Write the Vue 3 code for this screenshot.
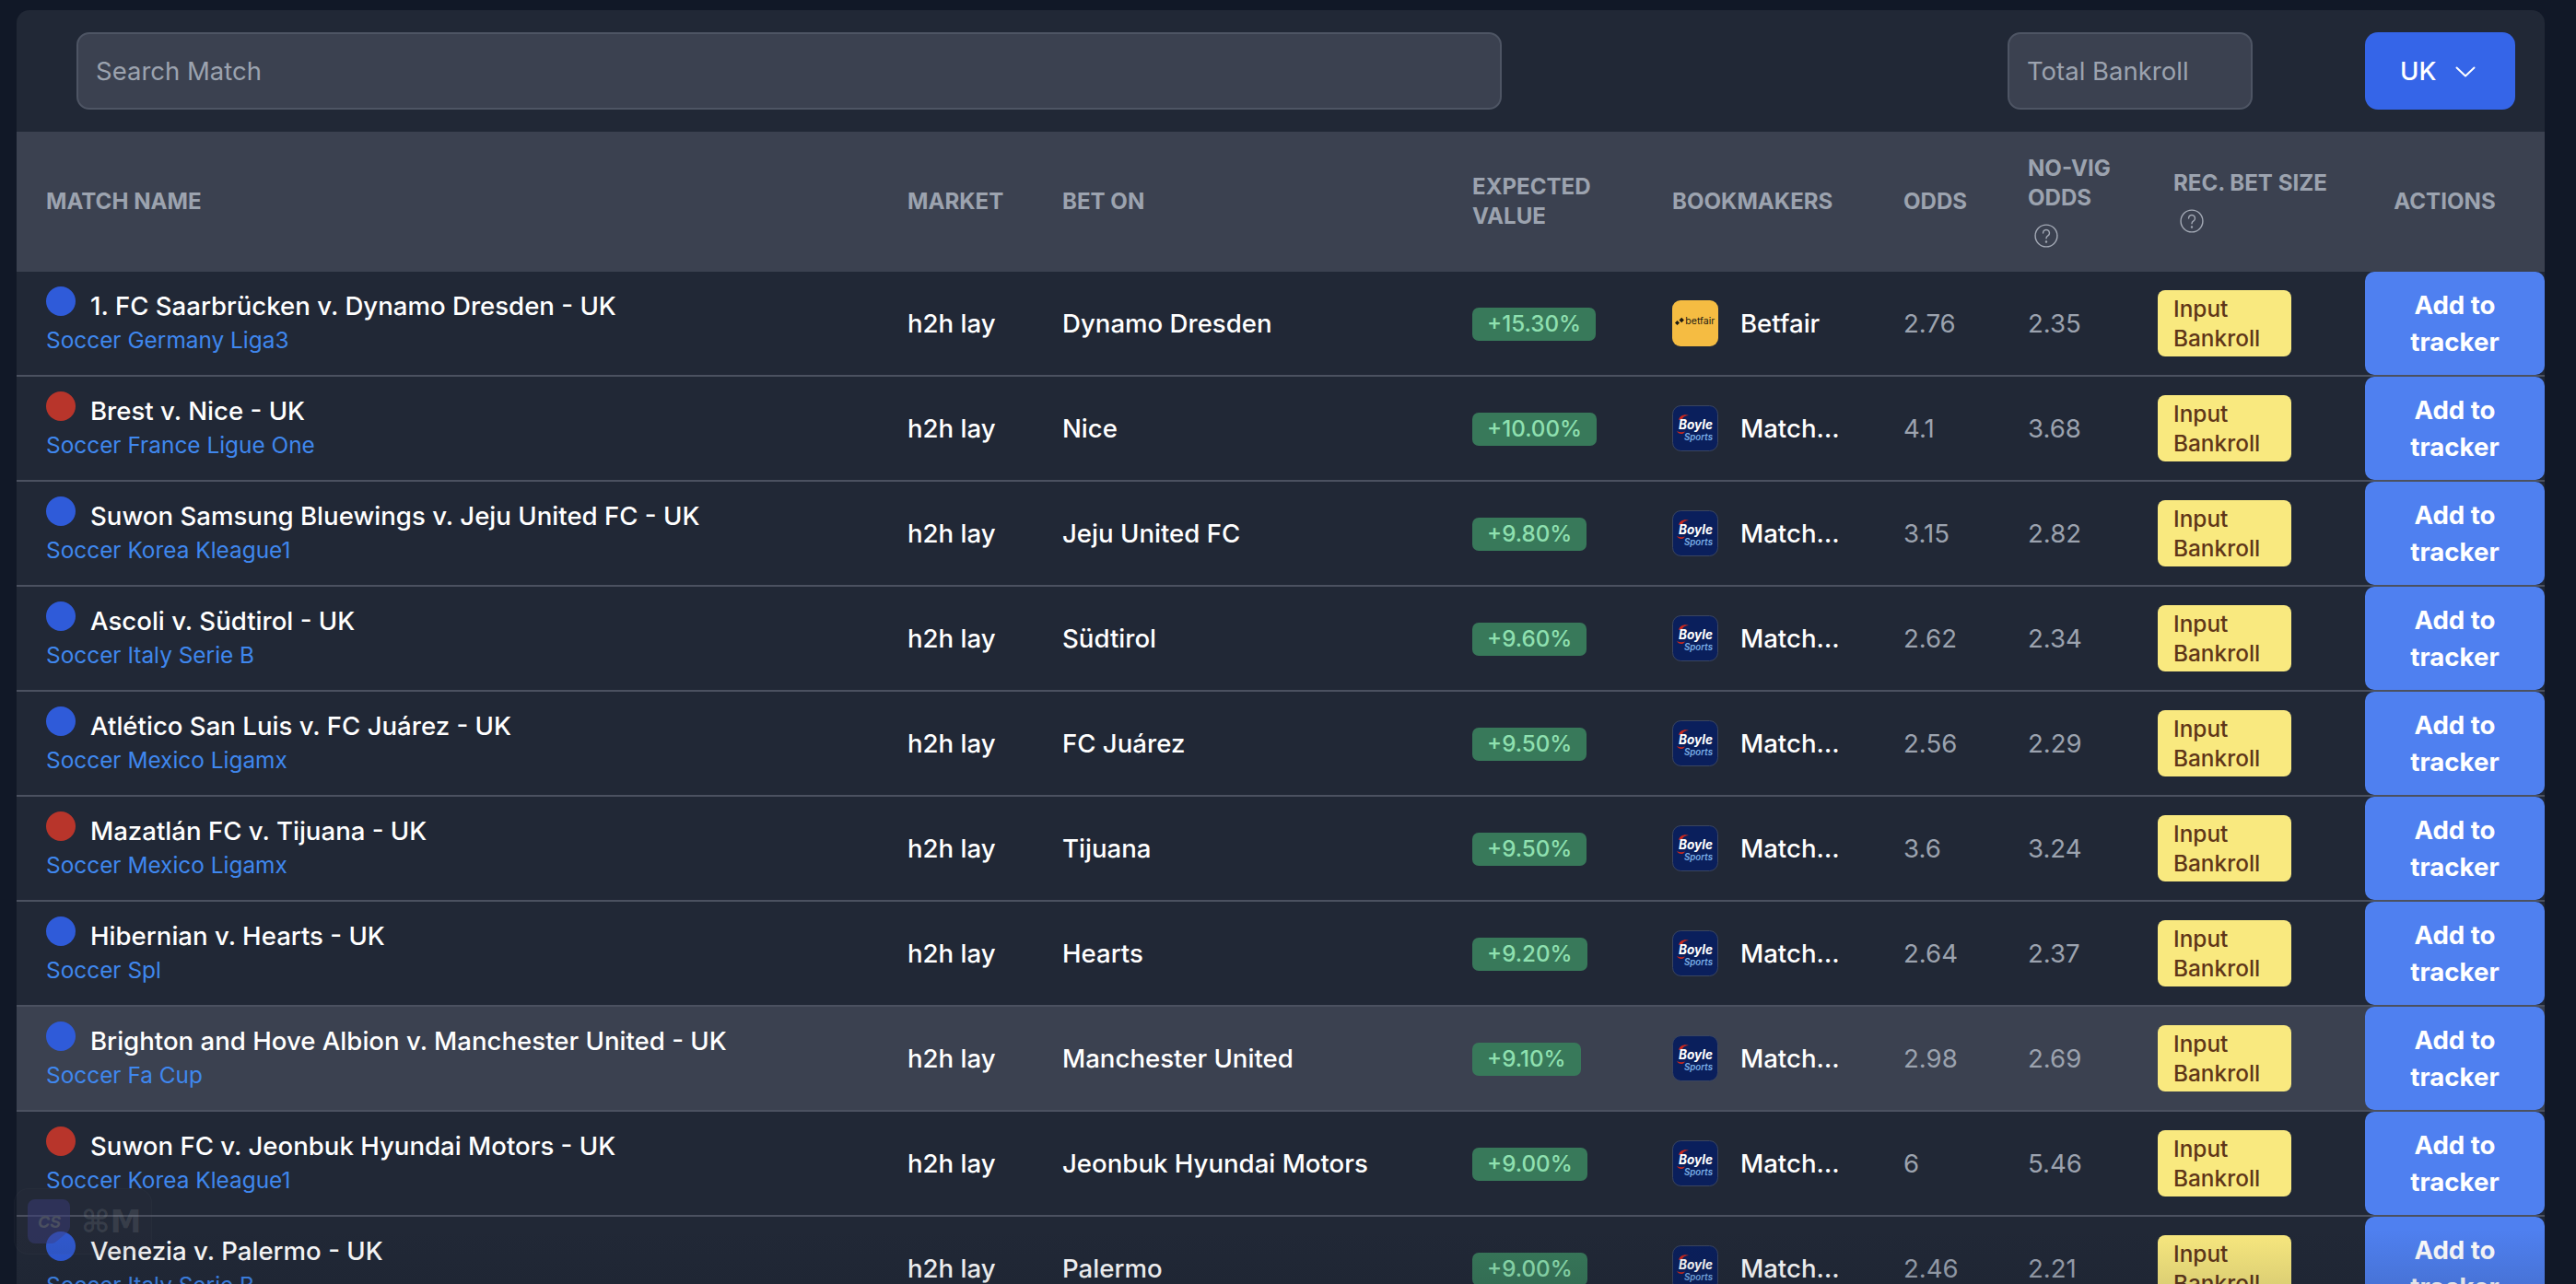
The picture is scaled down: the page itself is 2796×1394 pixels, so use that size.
<template>
  <div class="page">
    <div class="panel">
      <div class="toolbar">
        <input class="field search" type="text" placeholder="Search Match" autocomplete="off" />
        <input class="field bankroll" type="text" placeholder="Total Bankroll" autocomplete="off" />
        <button class="region">
          UK
          <svg class="chevron" viewBox="0 0 22 12" fill="none" stroke="currentColor" stroke-width="2" stroke-linecap="round" stroke-linejoin="round">
            <path d="M1.500 1.500L11 10.500l9.500-9" />
          </svg>
        </button>
      </div>

      <div class="grid head">
        <div>Match Name</div>
        <div>Market</div>
        <div>Bet On</div>
        <div class="narrow">Expected Value</div>
        <div>Bookmakers</div>
        <div>Odds</div>
        <div class="narrow">
          No-Vig Odds
          <svg class="help" viewBox="0 0 24 24" fill="none" stroke="currentColor" stroke-width="1.3" stroke-linecap="round">
            <circle cx="12" cy="12" r="11" />
            <path d="M8.8 9.2a3.2 3.2 0 1 1 4.9 2.7c-1 .7-1.7 1.3-1.7 2.6" />
            <circle cx="12" cy="18" r=".5" />
          </svg>
        </div>
        <div class="rec">
          Rec. Bet Size
          <svg class="help" viewBox="0 0 24 24" fill="none" stroke="currentColor" stroke-width="1.3" stroke-linecap="round">
            <circle cx="12" cy="12" r="11" />
            <path d="M8.8 9.2a3.2 3.2 0 1 1 4.9 2.7c-1 .7-1.7 1.3-1.7 2.6" />
            <circle cx="12" cy="18" r=".5" />
          </svg>
        </div>
        <div class="actions-head">Actions</div>
      </div>

      <div
        v-for="row in rows"
        :key="row.name"
        class="grid row"
        :class="{ hovered: row.hovered }"
      >
        <div class="match">
          <div class="match-name">
            <span class="dot" :class="row.dot"></span>
            <span>{{ row.name }} - UK</span>
          </div>
          <div class="league">{{ row.league }}</div>
        </div>
        <div class="strong">h2h lay</div>
        <div class="strong">{{ row.bet }}</div>
        <div><span class="badge">{{ row.ev }}</span></div>
        <div class="book">
          <svg v-if="row.book === 'Betfair'" class="logo" viewBox="0 0 50 50">
            <rect width="50" height="50" rx="9" fill="#f5bc42" />
            <path d="M3 24.5l2.500-2.500 2.500 2.500-2.500 2.500zM7.500 21.500l2.700-2.700 2.700 2.700-2.700 2.700z" fill="#1c1a12" />
            <text x="14.300" y="26" class="logo-betfair" textLength="32" lengthAdjust="spacingAndGlyphs">betfair</text>
          </svg>
          <svg v-else class="logo" viewBox="0 0 50 50">
            <rect x=".5" y=".5" width="49" height="49" rx="9" fill="#0a1f5c" stroke="#3a4560" />
            <path d="M7 16c1-5 7-7 11-5-3 0-6 1-7 4z" fill="#c8281e" />
            <path d="M5 28c3 1.500 6 1.500 9 .5-2 3.500-7 3.500-9-.5z" fill="#c8281e" />
            <text x="7" y="26" class="logo-boyle" textLength="37" lengthAdjust="spacingAndGlyphs">Boyle</text>
            <text x="13" y="38" class="logo-sports" textLength="31" lengthAdjust="spacingAndGlyphs">Sports</text>
          </svg>
          <span class="strong">{{ row.book === 'Betfair' ? 'Betfair' : 'Match…' }}</span>
        </div>
        <div class="num">{{ row.odds }}</div>
        <div class="num">{{ row.noVig }}</div>
        <div><span class="input-tag">Input Bankroll</span></div>
        <button class="add">Add to tracker</button>
      </div>
    </div>

    <div class="fade"></div>

    <div class="ghost">
      <svg class="ghost-icon" viewBox="0 0 46 48">
        <path d="M8 0h30a8 8 0 0 1 8 8v22a8 8 0 0 1-3 6l-12 10a8 8 0 0 1-5 2H8a8 8 0 0 1-8-8V8a8 8 0 0 1 8-8z" fill="#3c3f80" fill-opacity=".45" />
        <text x="11" y="31" class="ghost-cs">CS</text>
      </svg>
      <span class="ghost-key">⌘M</span>
    </div>
  </div>
</template>

<script setup>
const rows = [
  { name: '1. FC Saarbrücken v. Dynamo Dresden', league: 'Soccer Germany Liga3', bet: 'Dynamo Dresden', ev: '+15.30%', book: 'Betfair', odds: '2.76', noVig: '2.35', dot: 'blue' },
  { name: 'Brest v. Nice', league: 'Soccer France Ligue One', bet: 'Nice', ev: '+10.00%', book: 'Boyle', odds: '4.1', noVig: '3.68', dot: 'red' },
  { name: 'Suwon Samsung Bluewings v. Jeju United FC', league: 'Soccer Korea Kleague1', bet: 'Jeju United FC', ev: '+9.80%', book: 'Boyle', odds: '3.15', noVig: '2.82', dot: 'blue' },
  { name: 'Ascoli v. Südtirol', league: 'Soccer Italy Serie B', bet: 'Südtirol', ev: '+9.60%', book: 'Boyle', odds: '2.62', noVig: '2.34', dot: 'blue' },
  { name: 'Atlético San Luis v. FC Juárez', league: 'Soccer Mexico Ligamx', bet: 'FC Juárez', ev: '+9.50%', book: 'Boyle', odds: '2.56', noVig: '2.29', dot: 'blue' },
  { name: 'Mazatlán FC v. Tijuana', league: 'Soccer Mexico Ligamx', bet: 'Tijuana', ev: '+9.50%', book: 'Boyle', odds: '3.6', noVig: '3.24', dot: 'red' },
  { name: 'Hibernian v. Hearts', league: 'Soccer Spl', bet: 'Hearts', ev: '+9.20%', book: 'Boyle', odds: '2.64', noVig: '2.37', dot: 'blue' },
  { name: 'Brighton and Hove Albion v. Manchester United', league: 'Soccer Fa Cup', bet: 'Manchester United', ev: '+9.10%', book: 'Boyle', odds: '2.98', noVig: '2.69', dot: 'blue', hovered: true },
  { name: 'Suwon FC v. Jeonbuk Hyundai Motors', league: 'Soccer Korea Kleague1', bet: 'Jeonbuk Hyundai Motors', ev: '+9.00%', book: 'Boyle', odds: '6', noVig: '5.46', dot: 'red' },
  { name: 'Venezia v. Palermo', league: 'Soccer Italy Serie B', bet: 'Palermo', ev: '+9.00%', book: 'Boyle', odds: '2.46', noVig: '2.21', dot: 'blue' }
]
</script>

<style>
html,
body {
  height: 100%;
  margin: 0;
  overflow: hidden;
  background: #111827;
}
</style>

<style scoped>
.page {
  position: relative;
  height: 1394px;
  overflow: hidden;
  padding: 11px 34px 0 18px;
  box-sizing: border-box;
  background: #111827;
  font-family: Inter, "Liberation Sans", sans-serif;
  font-size: 27.6px;
  color: #fff;
}

.panel {
  background: #212836;
  border-radius: 14px 14px 0 0;
}

.toolbar {
  height: 132px;
  display: flex;
  align-items: center;
  padding: 0 32px 0 65px;
}

.field {
  height: 84px;
  box-sizing: border-box;
  padding: 0 19px;
  background: #3b4150;
  border: 2px solid #4e5564;
  border-radius: 14px;
  color: #fff;
  font-family: inherit;
  font-size: 27.5px;
  outline: none;
}

.field::placeholder {
  color: #9ca3af;
  opacity: 1;
}

.search {
  width: 1547px;
}

.bankroll {
  width: 266px;
  margin-left: auto;
}

.region {
  width: 163px;
  height: 84px;
  margin-left: 122px;
  padding: 0 0 0 38px;
  display: flex;
  align-items: center;
  gap: 21px;
  border: none;
  border-radius: 14px;
  background: #3565e8;
  color: #fff;
  font-family: inherit;
  font-size: 27.6px;
  font-weight: 500;
}

.chevron {
  width: 22px;
  height: 12px;
  margin-top: 2px;
}

.grid {
  display: grid;
  grid-template-columns: 935px 168px 445px 217px 251px 135px 141px 225px 195px;
  padding-left: 32px;
  align-items: center;
}

.head {
  height: 152px;
  background: #3b4150;
  color: #9ca3af;
  font-size: 24.1px;
  font-weight: 700;
  line-height: 32px;
  text-transform: uppercase;
}

.narrow {
  max-width: 140px;
}

.rec {
  padding-left: 17px;
}

.actions-head {
  padding-right: 22px;
  text-align: center;
}

.help {
  display: block;
  width: 26px;
  height: 26px;
  margin: 12px 0 2px 7px;
  stroke: #a3a9b5;
}

.row {
  height: 112px;
  border-bottom: 2px solid #4b5160;
}

.row.hovered {
  background: #3b4150;
}

.match {
  margin-bottom: 3px;
}

.match-name {
  display: flex;
  align-items: flex-start;
  font-weight: 500;
  line-height: 36px;
}

.dot {
  width: 32px;
  height: 32px;
  margin: -3px 16px 0 0;
  border-radius: 50%;
}

.dot.blue {
  background: #2f5bd9;
}

.dot.red {
  background: #b8352b;
}

.league {
  margin-top: 3px;
  color: #3f87ee;
  font-size: 24.4px;
  line-height: 32px;
}

.strong {
  font-weight: 500;
}

.badge {
  display: inline-block;
  padding: 0 16px;
  border-radius: 7px;
  background: #38795a;
  color: #8fe0b0;
  font-size: 24.2px;
  font-weight: 500;
  line-height: 36px;
}

.book {
  display: flex;
  align-items: center;
  gap: 24px;
}

.logo {
  width: 50px;
  height: 50px;
  flex-shrink: 0;
}

.logo-betfair {
  font-family: Inter, sans-serif;
  font-size: 10px;
  font-weight: 400;
  fill: #1c1a12;
}

.logo-boyle {
  font-family: Inter, sans-serif;
  font-size: 14px;
  font-weight: 700;
  font-style: italic;
  fill: #fff;
}

.logo-sports {
  font-family: Inter, sans-serif;
  font-size: 10.5px;
  font-weight: 600;
  font-style: italic;
  fill: #79aee6;
}

.num {
  color: #9ca3af;
}

.input-tag {
  display: block;
  width: 145px;
  height: 72px;
  box-sizing: border-box;
  padding: 4px 0 4px 17px;
  border-radius: 8px;
  background: #f9e97f;
  color: #5f3618;
  font-size: 24.4px;
  font-weight: 500;
  line-height: 32px;
}

.add {
  align-self: stretch;
  padding: 0 30px;
  border: none;
  border-radius: 10px;
  background: #4f80f0;
  color: #fff;
  font-family: inherit;
  font-size: 27.6px;
  font-weight: 700;
  line-height: 40px;
}

.fade {
  position: absolute;
  left: 0;
  right: 0;
  bottom: 0;
  height: 60px;
  background: linear-gradient(rgba(17, 24, 39, 0), rgba(17, 24, 39, 0.12));
  pointer-events: none;
}

.ghost {
  position: absolute;
  left: 15px;
  top: 1290px;
  width: 150px;
  height: 72px;
  box-sizing: border-box;
  padding-left: 14px;
  display: flex;
  align-items: center;
  gap: 12px;
  border-radius: 16px;
  background: rgba(60, 66, 80, 0.08);
  border: 1px solid rgba(255, 255, 255, 0.02);
}

.ghost-icon {
  width: 46px;
  height: 48px;
  flex-shrink: 0;
}

.ghost-cs {
  font-family: Inter, sans-serif;
  font-size: 18px;
  font-weight: 700;
  font-style: italic;
  fill: #4a4f60;
}

.ghost-key {
  font-family: "DejaVu Sans", sans-serif;
  font-size: 34px;
  font-weight: 700;
  color: rgba(255, 255, 255, 0.1);
  white-space: nowrap;
}
</style>
